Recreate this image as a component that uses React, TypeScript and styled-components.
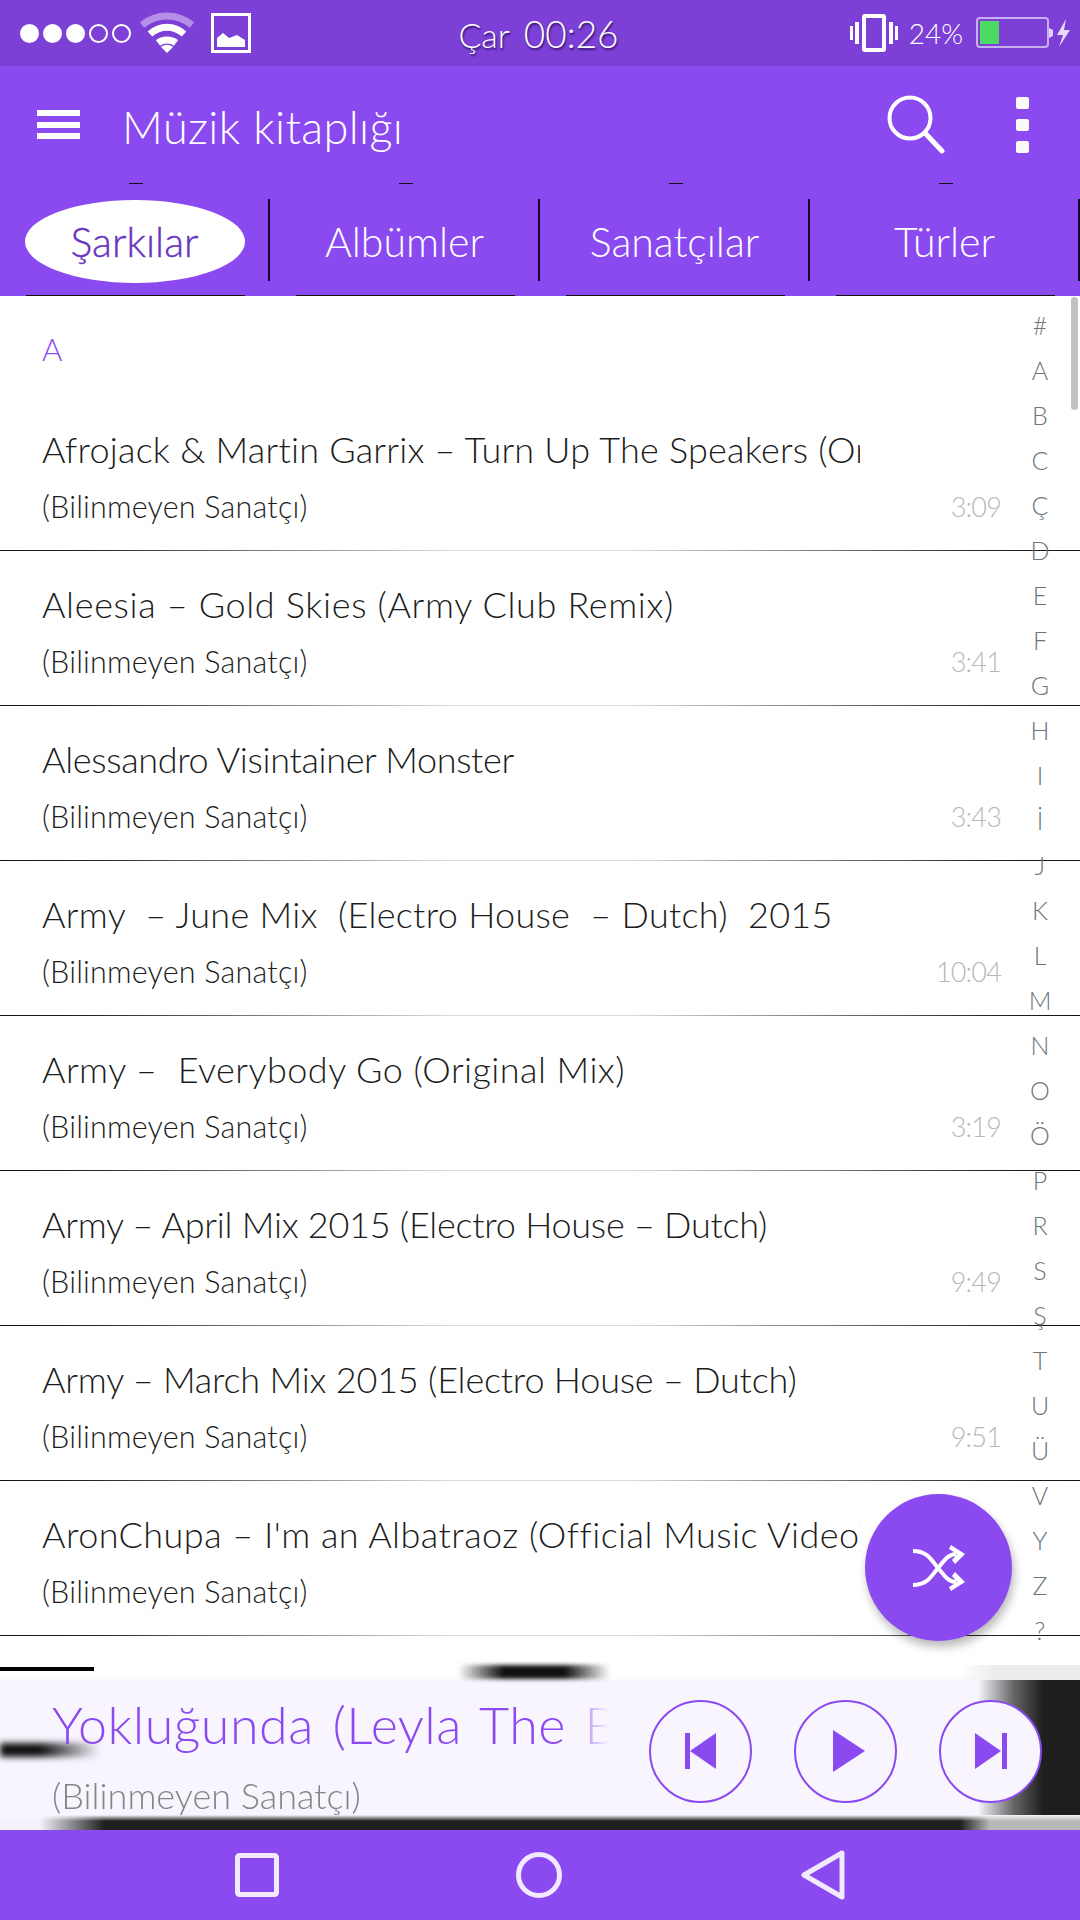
import React from "react";
import { createGlobalStyle, styled } from "styled-components";

const purple = "#8b4af0";
const font = `"Lato", "Inter", "Liberation Sans", sans-serif`;

const songs = [
  { title: "Afrojack & Martin Garrix – Turn Up The Speakers (Original Mix)", time: "3:09", spacing: 0.22 },
  { title: "Aleesia – Gold Skies (Army Club Remix)", time: "3:41", spacing: 0.65 },
  { title: "Alessandro Visintainer Monster", time: "3:43", spacing: -0.33 },
  { title: "Army  – June Mix  (Electro House  – Dutch)  2015", time: "10:04", spacing: 0.3 },
  { title: "Army –  Everybody Go (Original Mix)", time: "3:19", spacing: 0.45 },
  { title: "Army – April Mix 2015 (Electro House – Dutch)", time: "9:49", spacing: -0.25 },
  { title: "Army – March Mix 2015 (Electro House – Dutch)", time: "9:51", spacing: -0.2 },
  { title: "AronChupa – I'm an Albatraoz (Official Music Video)", time: "", spacing: 0.47 },
];

const letters = "# A B C Ç D E F G H I İ J K L M N O Ö P R S Ş T U Ü V Y Z ?".split(" ");
const tabs = ["Şarkılar", "Albümler", "Sanatçılar", "Türler"];

const GlobalStyle = createGlobalStyle`
  html, body {
    margin: 0;
    padding: 0;
    background: #fff;
    font-family: ${font};
    font-weight: 300;
  }
  * { box-sizing: border-box; }
`;

const Screen = styled.div`
  width: 1080px;
  height: 1920px;
  display: flex;
  flex-direction: column;
  overflow: hidden;
  background: #fff;
`;

const StatusBar = styled.div`
  height: 66px;
  flex: none;
  background: #7c40d6;
  display: grid;
  grid-template-columns: 1fr auto 1fr;
  align-items: center;
  padding: 0 23px 0 20px;
  color: #fff;
`;

const StatusLeft = styled.div`
  display: flex;
  align-items: center;
`;

const StatusRight = styled.div`
  display: flex;
  align-items: center;
  justify-content: flex-end;
  margin-right: -16px;
`;

const SignalDots = styled.div`
  display: flex;
  gap: 4px;
  margin-right: 8px;
`;

const SignalDot = styled.span<{ $on: boolean }>`
  width: 19px;
  height: 19px;
  border-radius: 50%;
  border: 2px solid #fff;
  background: ${(p) => (p.$on ? "#fff" : "transparent")};
`;

const Clock = styled.div`
  display: flex;
  align-items: baseline;
  gap: 14px;
  text-shadow: 1px 2px 2px rgba(20, 0, 60, 0.7);
`;

const ClockDay = styled.span`
  font-size: 34px;
`;

const ClockTime = styled.span`
  font-size: 37px;
`;

const BatteryText = styled.span`
  font-size: 28px;
  margin: 0 13px 0 11px;
`;

const AppBar = styled.div`
  height: 117px;
  flex: none;
  background: ${purple};
  display: flex;
  align-items: center;
  padding: 0 51px 0 37px;
  color: #fff;
`;

const Burger = styled.div`
  width: 43px;
  height: 29px;
  display: flex;
  flex-direction: column;
  justify-content: space-between;
  margin-right: 42px;
  span {
    height: 6px;
    background: #fff;
  }
`;

const AppTitle = styled.div`
  flex: 1;
  font-size: 45px;
  letter-spacing: 0.4px;
  padding-top: 4px;
`;

const OverflowDots = styled.div`
  margin-left: 71px;
  display: flex;
  flex-direction: column;
  gap: 10px;
  span {
    width: 13px;
    height: 12px;
    border-radius: 2px;
    background: #fafafa;
  }
`;

const TabBar = styled.div`
  height: 113px;
  flex: none;
  background: ${purple};
  display: flex;
`;

const Tab = styled.div`
  position: relative;
  width: 270px;
  display: flex;
  align-items: center;
  justify-content: center;
  padding-top: 3px;
  &::before {
    content: "";
    position: absolute;
    top: 0;
    left: 129px;
    width: 14px;
    height: 1px;
    background: #111;
  }
  &::after {
    content: "";
    position: absolute;
    bottom: 0;
    left: 26px;
    right: 25px;
    height: 1.5px;
    background: #111;
  }
`;

const TabDivider = styled.span`
  position: absolute;
  right: 0;
  top: 16px;
  bottom: 15px;
  width: 2.5px;
  background: #14082c;
`;

const TabLabel = styled.span<{ $active: boolean }>`
  width: 220px;
  height: 83px;
  margin-right: 1px;
  display: flex;
  align-items: center;
  justify-content: center;
  font-size: 41px;
  border-radius: 50%;
  color: ${(p) => (p.$active ? "#6a35c0" : "#fff")};
  background: ${(p) => (p.$active ? "#fff" : "transparent")};
  -webkit-text-stroke: ${(p) => (p.$active ? "0.4px #6a35c0" : "0")};
`;

const Main = styled.div`
  position: relative;
  flex: 1;
  min-height: 0;
`;

const ListClip = styled.div`
  position: relative;
  height: 1344px;
  overflow: hidden;
`;

const SectionHeader = styled.div`
  height: 100px;
  padding: 34px 0 0 42px;
  color: ${purple};
  font-size: 31px;
`;

const Row = styled.div`
  position: relative;
  height: 155px;
  padding: 29px 0 0 42px;
  &::after {
    content: "";
    position: absolute;
    left: 0;
    right: 0;
    bottom: 0;
    height: 1.5px;
    background: linear-gradient(90deg, #111 0%, #222 8%, #ddd 42%, #ddd 58%, #222 92%, #111 100%);
  }
`;

const RowTitle = styled.div<{ $spacing: number }>`
  width: 818px;
  height: 48px;
  font-size: 36px;
  line-height: 48px;
  letter-spacing: ${(p) => p.$spacing}px;
  color: #1c1c1c;
  white-space: pre;
  overflow: hidden;
`;

const RowMeta = styled.div`
  width: 959px;
  margin-top: 15px;
  display: flex;
  justify-content: space-between;
  align-items: center;
`;

const RowArtist = styled.span`
  font-size: 30.5px;
  letter-spacing: 0.2px;
  color: #1c1c1c;
`;

const RowTime = styled.span`
  font-size: 27px;
  letter-spacing: -0.8px;
  color: #b4b8bb;
`;

const AlphaIndex = styled.div`
  position: absolute;
  top: 7px;
  left: 1010px;
  width: 60px;
  display: flex;
  flex-direction: column;
  align-items: center;
`;

const AlphaLetter = styled.span`
  height: 45px;
  line-height: 45px;
  font-size: 25px;
  color: #6a7680;
`;

const ScrollThumb = styled.div`
  position: absolute;
  top: 1px;
  right: 2px;
  width: 7px;
  height: 113px;
  border-radius: 4px;
  background: #c2c2c2;
`;

const Fab = styled.div`
  position: absolute;
  left: 865px;
  top: 1198px;
  width: 147px;
  height: 147px;
  border-radius: 50%;
  background: ${purple};
  display: flex;
  align-items: center;
  justify-content: center;
  box-shadow: 2px 6px 10px rgba(0, 0, 0, 0.28);
`;

const Player = styled.div`
  position: relative;
  height: 165px;
  flex: none;
  display: flex;
  align-items: center;
  background: linear-gradient(#fff 0, #fff 12px, #f8f5fe 16px);
  padding: 7px 32px 0 52px;
  &::before {
    content: "";
    position: absolute;
    left: 0;
    right: 0;
    bottom: 0;
    height: 15px;
    background: linear-gradient(90deg, #f4f1fa 40px, #1e1e1e 105px, #1e1e1e 960px, #b9b9b9 990px);
    -webkit-mask-image: linear-gradient(transparent, #000 6px);
    mask-image: linear-gradient(transparent, #000 6px);
  }
`;

const TopStreak = styled.span`
  position: absolute;
  left: 0;
  top: 2px;
  width: 94px;
  height: 4px;
  background: #000;
`;

const CenterStreak = styled.span`
  position: absolute;
  left: 458px;
  top: 0;
  width: 152px;
  height: 14px;
  filter: blur(2px);
  background: linear-gradient(90deg, transparent, #111 30%, #111 70%, transparent);
`;

const SideStreak = styled.span`
  position: absolute;
  left: 0;
  top: 78px;
  width: 100px;
  height: 14px;
  filter: blur(3px);
  background: linear-gradient(90deg, #111 40%, transparent);
`;

const RightBand = styled.span`
  position: absolute;
  right: 0;
  top: 0;
  width: 120px;
  height: 15px;
  background: linear-gradient(90deg, transparent, #ececec 30%);
`;

const RightShade = styled.span`
  position: absolute;
  right: 0;
  top: 15px;
  bottom: 15px;
  width: 102px;
  background: linear-gradient(90deg, transparent 0, #666 35%, #1e1e1e 64%);
`;

const TrackInfo = styled.div`
  position: relative;
  width: 557px;
  margin-top: 8px;
  flex: none;
  overflow: hidden;
  -webkit-mask-image: linear-gradient(90deg, #000 92%, transparent 100%);
  mask-image: linear-gradient(90deg, #000 92%, transparent 100%);
`;

const TrackTitle = styled.div`
  font-size: 52px;
  line-height: 62px;
  letter-spacing: 0.5px;
  word-spacing: 4px;
  color: ${purple};
  white-space: nowrap;
`;

const TrackArtist = styled.div`
  margin-top: 18px;
  font-size: 36px;
  line-height: 44px;
  color: #858585;
`;

const Controls = styled.div`
  position: relative;
  margin-left: 40px;
  display: flex;
  gap: 42px;
`;

const RoundButton = styled.div`
  width: 103px;
  height: 103px;
  border: 2px solid ${purple};
  border-radius: 50%;
  display: flex;
  align-items: center;
  justify-content: center;
  background: #f8f5fe;
`;

const NavBar = styled.div`
  height: 90px;
  flex: none;
  background: ${purple};
  display: grid;
  grid-template-columns: 257px 283px 283px;
  padding-left: 0;
  align-items: center;
`;

const NavCell = styled.div`
  display: flex;
  justify-content: flex-end;
  transform: translateX(22px);
`;

const WifiIcon = () => (
  <svg width="56" height="44" viewBox="0 0 56 44" fill="none" strokeWidth="7">
    <path d="M3 14C18 2 38 2 53 14" stroke="#b48ee8" />
    <path d="M11 23C21 14 35 14 45 23" stroke="#fff" />
    <path d="M19 32C24 28 32 28 37 32" stroke="#fff" />
    <path d="M22 36L28 42L34 36C30 33 26 33 22 36Z" fill="#fff" />
  </svg>
);

const PictureIcon = () => (
  <svg width="40" height="40" viewBox="0 0 40 40" style={{ marginLeft: 16 }}>
    <rect x="1.5" y="1.5" width="37" height="37" fill="none" stroke="#fff" strokeWidth="3" />
    <path d="M6 34V25L12 20L18 25L26 22L34 27V34Z" fill="#fff" />
  </svg>
);

const VibrateIcon = () => (
  <svg width="48" height="38" viewBox="0 0 48 38">
    <rect x="14" y="2" width="20" height="34" rx="1" fill="none" stroke="#fff" strokeWidth="4" />
    <rect x="0" y="12" width="3" height="14" fill="#fff" />
    <rect x="5" y="8" width="4" height="22" fill="#fff" />
    <rect x="39" y="8" width="4" height="22" fill="#fff" />
    <rect x="45" y="12" width="3" height="14" fill="#fff" />
  </svg>
);

const BatteryIcon = () => (
  <svg width="97" height="34" viewBox="0 0 97 34">
    <rect x="1" y="2" width="71" height="29" rx="3" fill="none" stroke="#c9aef0" strokeWidth="2" />
    <rect x="4" y="5" width="19" height="23" fill="#4cd964" />
    <path d="M73 12L77 14V20L73 22Z" fill="#e0d0f8" />
    <path d="M90 3L81 19H87L83 31L94 14H88Z" fill="#e6daf9" />
  </svg>
);

const SearchIcon = () => (
  <svg width="58" height="60" viewBox="0 0 58 60" fill="none" stroke="#fff" strokeWidth="4">
    <circle cx="23" cy="23" r="20.5" />
    <path d="M38 38L55 56" strokeWidth="5" strokeLinecap="round" />
  </svg>
);

const ShuffleIcon = () => (
  <svg width="54" height="46" viewBox="0 0 54 46" fill="none">
    <path d="M1 6C16 6 20 16 26 23C32 30 36 37 44 37" stroke="#fff" strokeWidth="4" />
    <path d="M1 40C16 40 20 30 26 23C32 16 36 9 44 9" stroke="#fff" strokeWidth="4" />
    <path d="M39 0L53 9L43 19L40 15L45 9L37 4Z" fill="#fff" />
    <path d="M39 46L53 37L43 27L40 31L45 37L37 42Z" fill="#fff" />
  </svg>
);

const PrevIcon = () => (
  <svg width="32" height="36" viewBox="0 0 32 36" fill={purple}>
    <rect x="0" y="0" width="5" height="36" />
    <path d="M31 0V36L5 18Z" />
  </svg>
);

const PlayIcon = () => (
  <svg width="32" height="42" viewBox="0 0 32 42" fill={purple} style={{ marginLeft: 6 }}>
    <path d="M0 0L32 21L0 42Z" />
  </svg>
);

const NextIcon = () => (
  <svg width="32" height="36" viewBox="0 0 32 36" fill={purple}>
    <path d="M0 0V36L26 18Z" />
    <rect x="27" y="0" width="5" height="36" />
  </svg>
);

const navStroke = "#f1e9fd";

const App = () => {
  return (
    <Screen>
      <GlobalStyle />
      <StatusBar>
        <StatusLeft>
          <SignalDots>
            {[true, true, true, false, false].map((on, i) => (
              <SignalDot key={i} $on={on} />
            ))}
          </SignalDots>
          <WifiIcon />
          <PictureIcon />
        </StatusLeft>
        <Clock>
          <ClockDay>Çar</ClockDay>
          <ClockTime>00:26</ClockTime>
        </Clock>
        <StatusRight>
          <VibrateIcon />
          <BatteryText>24%</BatteryText>
          <BatteryIcon />
        </StatusRight>
      </StatusBar>

      <AppBar>
        <Burger>
          <span />
          <span />
          <span />
        </Burger>
        <AppTitle>Müzik kitaplığı</AppTitle>
        <SearchIcon />
        <OverflowDots>
          <span />
          <span />
          <span />
        </OverflowDots>
      </AppBar>

      <TabBar>
        {tabs.map((tab, i) => (
          <Tab key={tab}>
            <TabLabel $active={i === 0}>{tab}</TabLabel>
            <TabDivider />
          </Tab>
        ))}
      </TabBar>

      <Main>
        <ListClip>
          <SectionHeader>A</SectionHeader>
          {songs.map((song) => (
            <Row key={song.title}>
              <RowTitle $spacing={song.spacing}>{song.title}</RowTitle>
              <RowMeta>
                <RowArtist>(Bilinmeyen Sanatçı)</RowArtist>
                <RowTime>{song.time}</RowTime>
              </RowMeta>
            </Row>
          ))}
          <AlphaIndex>
            {letters.map((letter) => (
              <AlphaLetter key={letter}>{letter}</AlphaLetter>
            ))}
          </AlphaIndex>
          <ScrollThumb />
        </ListClip>
        <Fab>
          <ShuffleIcon />
        </Fab>
      </Main>

      <Player>
        <TopStreak />
        <CenterStreak />
        <SideStreak />
        <RightBand />
        <RightShade />
        <TrackInfo>
          <TrackTitle>Yokluğunda (Leyla The Band)</TrackTitle>
          <TrackArtist>(Bilinmeyen Sanatçı)</TrackArtist>
        </TrackInfo>
        <Controls>
          <RoundButton>
            <PrevIcon />
          </RoundButton>
          <RoundButton>
            <PlayIcon />
          </RoundButton>
          <RoundButton>
            <NextIcon />
          </RoundButton>
        </Controls>
      </Player>

      <NavBar>
        <NavCell>
          <svg width="44" height="44" viewBox="0 0 44 44" fill="none" stroke={navStroke} strokeWidth="5">
            <rect x="2.5" y="2.5" width="39" height="39" rx="2" />
          </svg>
        </NavCell>
        <NavCell>
          <svg width="46" height="46" viewBox="0 0 46 46" fill="none" stroke={navStroke} strokeWidth="5">
            <circle cx="23" cy="23" r="20.5" />
          </svg>
        </NavCell>
        <NavCell>
          <svg width="44" height="50" viewBox="0 0 44 50" fill="none" stroke={navStroke} strokeWidth="5" strokeLinejoin="round">
            <path d="M41 3V47L3 25Z" />
          </svg>
        </NavCell>
      </NavBar>
    </Screen>
  );
};

export default App;
